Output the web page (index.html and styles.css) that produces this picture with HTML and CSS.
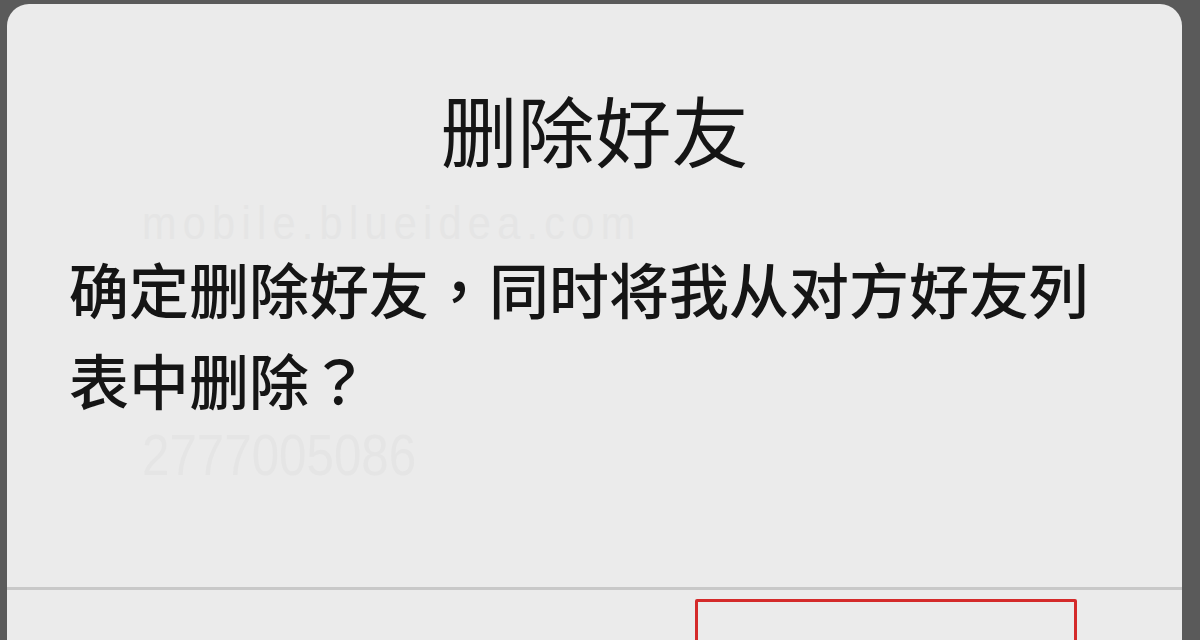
FILE: index.html
```html
<!DOCTYPE html>
<html lang="zh-Hant">
<head>
<meta charset="utf-8">
<link rel="stylesheet" href="styles.css">
</head>
<body>
<div class="dialog">
  <div class="title">删除好友</div>
  <div class="content">
    <div class="wm wm1">mobile.blueidea.com</div>
    <p class="msg">确定删除好友，同时将我从对方好友列<br>表中删除？</p>
    <div class="wm wm2">2777005086</div>
  </div>
  <div class="footer">
    <div class="btn"></div>
    <div class="btn btn-ok"></div>
  </div>
</div>
</body>
</html>
```
FILE: styles.css
```css
html, body {
  margin: 0;
  padding: 0;
}
body {
  width: 1200px;
  height: 640px;
  overflow: hidden;
  background: #5a5a5a;
  font-family: "Noto Sans CJK TC", "Noto Sans CJK SC", sans-serif;
}
.dialog {
  margin: 4px 0 0 7px;
  width: 1175px;
  height: 720px;
  background: #ebebeb;
  border-radius: 22px 22px 0 0;
  display: flex;
  flex-direction: column;
}
.title {
  flex-shrink: 0;
  text-align: center;
  font-size: 77px;
  line-height: 77px;
  color: #151515;
  padding-top: 86px;
  height: 86px;
}
.content {
  flex-shrink: 0;
  position: relative;
  height: 411px;
}
.msg {
  margin: 0;
  padding: 66px 0 0 62px;
  font-size: 60px;
  line-height: 91px;
  font-weight: 500;
  color: #151515;
  position: relative;
}
.wm {
  position: absolute;
  color: #e5e5e5;
  font-family: "Liberation Sans Narrow", "Liberation Sans", sans-serif;
  transform-origin: left top;
}
.wm1 {
  left: 135px;
  top: 24px;
  font-size: 46px;
  line-height: 46px;
  letter-spacing: 7px;
  transform: scaleX(0.9);
}
.wm2 {
  left: 135px;
  top: 250px;
  font-size: 58px;
  line-height: 58px;
  transform: scaleX(0.85);
}
.footer {
  flex-shrink: 0;
  border-top: 3px solid #c8c8c8;
  display: flex;
  padding-top: 9px;
}
.btn {
  flex-shrink: 0;
  width: 688px;
  height: 200px;
}
.btn-ok {
  width: 376px;
  border: 3px solid #d42a2a;
  border-radius: 2px;
}
```
